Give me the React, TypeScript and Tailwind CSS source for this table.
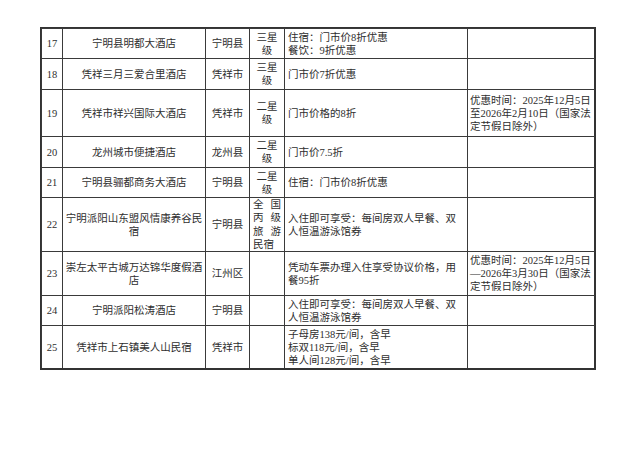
const font = { fontFamily: '"Liberation Serif", "Noto Sans CJK SC", serif' }

type Row = {
  no: string
  name: string[]
  area: string
  level: string[]
  levelJustify?: boolean
  offer: string[]
  note: string[]
}

const rows: Row[] = [
  { no: "17", name: ["宁明县明都大酒店"], area: "宁明县", level: ["三星", "级"], offer: ["住宿：门市价8折优惠", "餐饮：9折优惠"], note: [] },
  { no: "18", name: ["凭祥三月三爱合里酒店"], area: "凭祥市", level: ["三星", "级"], offer: ["门市价7折优惠"], note: [] },
  {
    no: "19",
    name: ["凭祥市祥兴国际大酒店"],
    area: "凭祥市",
    level: ["二星", "级"],
    offer: ["门市价格的8折"],
    note: ["优惠时间：2025年12月5日", "至2026年2月10日（国家法", "定节假日除外）"],
  },
  { no: "20", name: ["龙州城市便捷酒店"], area: "龙州县", level: ["二星", "级"], offer: ["门市价7.5折"], note: [] },
  { no: "21", name: ["宁明县骊都商务大酒店"], area: "宁明县", level: ["二星", "级"], offer: ["住宿：门市价8折优惠"], note: [] },
  {
    no: "22",
    name: ["宁明派阳山东盟风情康养谷民", "宿"],
    area: "宁明县",
    level: ["全国", "丙级", "旅游", "民宿"],
    levelJustify: true,
    offer: ["入住即可享受：每间房双人早餐、双", "人恒温游泳馆券"],
    note: [],
  },
  {
    no: "23",
    name: ["崇左太平古城万达锦华度假酒", "店"],
    area: "江州区",
    level: [],
    offer: ["凭动车票办理入住享受协议价格，用", "餐95折"],
    note: ["优惠时间：2025年12月5日", "—2026年3月30日（国家法", "定节假日除外）"],
  },
  { no: "24", name: ["宁明派阳松涛酒店"], area: "宁明县", level: [], offer: ["入住即可享受：每间房双人早餐、双", "人恒温游泳馆券"], note: [] },
  {
    no: "25",
    name: ["凭祥市上石镇美人山民宿"],
    area: "凭祥市",
    level: [],
    offer: ["子母房138元/间，含早", "标双118元/间，含早", "单人间128元/间，含早"],
    note: [],
  },
]

const cell = "border-l border-t border-[#3a3a3a] flex flex-col justify-center"

export default function App() {
  return (
    <div className="w-[640px] h-[453px] bg-white pl-[41px] pt-[28px] text-[#2e2e2e] text-[10.5px] leading-[13px]" style={font}>
      <div className="grid grid-cols-[21px_143px_44px_35px_183px_128px] grid-rows-[30px_31px_47px_31px_30px_54px_44px_30px_43px] w-[554px] border-r-[1.5px] border-b-[1.5px] border-[#333] outline outline-[0.5px] outline-[#333]">
        {rows.map((r) => (
          <div key={r.no} className="contents">
            <div className={`${cell} items-center`}>{r.no}</div>
            <div className={`${cell} items-center text-center px-[2px]`}>
              {r.name.map((l) => (
                <span key={l}>{l}</span>
              ))}
            </div>
            <div className={`${cell} items-center`}>{r.area}</div>
            <div className={`${cell} ${r.levelJustify ? "items-stretch px-[3px] leading-[13.5px]" : "items-center"}`}>
              {r.level.map((l, i) =>
                r.levelJustify && i < r.level.length - 1 ? (
                  <span key={l} className="flex justify-between">
                    <span>{l[0]}</span>
                    <span>{l[1]}</span>
                  </span>
                ) : (
                  <span key={l}>{l}</span>
                )
              )}
            </div>
            <div className={`${cell} items-start pl-[3px] pr-[2px]`}>
              {r.offer.map((l) => (
                <span key={l} className="whitespace-nowrap">{l}</span>
              ))}
            </div>
            <div className={`${cell} items-start pl-[2px]`}>
              {r.note.map((l) => (
                <span key={l} className="whitespace-nowrap">{l}</span>
              ))}
            </div>
          </div>
        ))}
      </div>
    </div>
  )
}
